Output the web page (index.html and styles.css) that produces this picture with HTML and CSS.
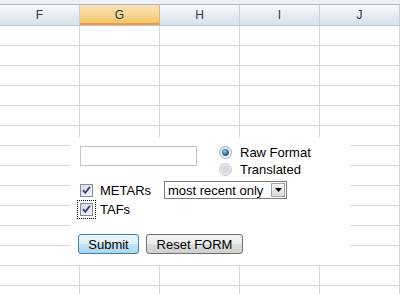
FILE: index.html
```html
<!DOCTYPE html>
<html lang="en">
<head>
  <meta charset="UTF-8">
  <title>METAR / TAF request</title>
  <link rel="stylesheet" href="styles.css">
</head>
<body>
  <div class="sheet">
    <div class="topbar"></div>
    <div class="head">
      <div class="col">F</div>
      <div class="col active">G</div>
      <div class="col">H</div>
      <div class="col">I</div>
      <div class="col">J</div>
    </div>
    <div class="cells"></div>

    <form class="panel" onsubmit="return false">
      <div class="top-row">
        <input class="station" type="text">
        <div class="radios">
          <label class="opt">
            <svg class="radio" width="13" height="13" viewBox="0 0 13 13">
              <defs>
                <linearGradient id="rg" x1="0" y1="0" x2="1" y2="1">
                  <stop offset="0" stop-color="#d9dcdf"/>
                  <stop offset="1" stop-color="#ffffff"/>
                </linearGradient>
                <radialGradient id="dot" cx="0.4" cy="0.35" r="0.7">
                  <stop offset="0" stop-color="#9fd3ec"/>
                  <stop offset="0.5" stop-color="#3b84ad"/>
                  <stop offset="1" stop-color="#1d4f73"/>
                </radialGradient>
              </defs>
              <circle cx="6.5" cy="6.5" r="6" fill="url(#rg)" stroke="#a9b3bd"/>
              <circle cx="6.5" cy="6.5" r="3.4" fill="url(#dot)"/>
            </svg>
            Raw Format
          </label>
          <label class="opt">
            <svg class="radio" width="13" height="13" viewBox="0 0 13 13">
              <circle cx="6.5" cy="6.5" r="6" fill="#e6e8ea" stroke="#c2c7cc"/>
              <circle cx="6.5" cy="6.5" r="4" fill="#d7dadd"/>
            </svg>
            Translated
          </label>
        </div>
      </div>

      <div class="line">
        <label class="check">
          <svg class="box" width="13" height="13" viewBox="0 0 13 13">
            <defs>
              <linearGradient id="cg" x1="0" y1="0" x2="1" y2="1">
                <stop offset="0" stop-color="#d6d9e0"/>
                <stop offset="1" stop-color="#f7f8fa"/>
              </linearGradient>
            </defs>
            <rect x="0.5" y="0.5" width="12" height="12" fill="url(#cg)" stroke="#7d8ea6"/>
            <path d="M3 6.2 L5.3 8.8 L10 2.8" fill="none" stroke="#343c86" stroke-width="1.8"/>
          </svg>
          METARs
        </label>
        <div class="select">
          <span class="value">most recent only</span>
          <span class="arrow"><svg width="7" height="4" viewBox="0 0 7 4"><path d="M0 0 H7 L3.5 4 Z" fill="#000"/></svg></span>
        </div>
      </div>

      <div class="line short">
        <label class="check">
          <span class="focus">
            <svg class="box" width="13" height="13" viewBox="0 0 13 13">
              <rect x="0.5" y="0.5" width="12" height="12" fill="url(#cg)" stroke="#7d8ea6"/>
              <path d="M3 6.2 L5.3 8.8 L10 2.8" fill="none" stroke="#343c86" stroke-width="1.8"/>
            </svg>
          </span>
          TAFs
        </label>
      </div>

      <div class="buttons">
        <button class="btn primary" type="submit">Submit</button>
        <button class="btn reset" type="reset">Reset FORM</button>
      </div>
    </form>
  </div>
</body>
</html>
```

FILE: styles.css
```css
body {
  margin: 0;
  font-family: "Liberation Sans", Arial, sans-serif;
  background: #fff;
}

.sheet {
  position: relative;
  width: 400px;
  height: 294px;
  overflow: hidden;
}

.topbar {
  height: 4px;
  background: #eef2f7;
  border-bottom: 1px solid #a7bace;
}

.head {
  display: grid;
  grid-template-columns: repeat(5, 80px);
  height: 20px;
  border-bottom: 1px solid #b9c7d6;
}

.col {
  display: flex;
  align-items: center;
  justify-content: center;
  font-size: 12px;
  color: #2c3946;
  background: linear-gradient(#f8fafc, #e4e9f0 60%, #d9e1ea);
  border-right: 1px solid #c6d2df;
}

.col.active {
  background: linear-gradient(#fae2b4, #f7d48f 55%, #f1c15f);
  border-right-color: #e8b45d;
  box-shadow: inset 0 -2px 0 #f29b3c;
}

.cells {
  height: 268px;
  background-image:
    linear-gradient(to right, transparent 79px, #d5d9df 79px),
    linear-gradient(to bottom, transparent 19px, #d5d9df 19px);
  background-size: 80px 100%, 100% 20px;
}

/* white form block lying over the grid */
.panel {
  position: absolute;
  left: 70px;
  top: 137px;
  width: 280px;
  height: 128px;
  box-sizing: border-box;
  padding: 7px 0 0 8px;
  background: #fff;
  font-size: 13px;
  color: #000;
}

.top-row {
  display: flex;
  height: 37px;
}

.station {
  box-sizing: border-box;
  width: 117px;
  height: 20px;
  margin: 2px 0 0 2px;
  border: 1px solid #c4c4c4;
  padding: 0 3px;
  font: inherit;
}

.radios {
  margin-left: 22px;
  display: flex;
  flex-direction: column;
}

.opt {
  display: flex;
  align-items: center;
  height: 17px;
  gap: 8px;
}

.line {
  display: grid;
  grid-template-columns: 86px auto;
  align-items: center;
  height: 18px;
}

.line.short {
  height: 17px;
  margin-top: 2px;
}

.check {
  display: flex;
  align-items: center;
  gap: 7px;
  padding-left: 2px;
}

.box {
  display: block;
}

.focus {
  outline: 1px dotted #000;
  outline-offset: 2px;
}

.select {
  display: flex;
  align-items: center;
  justify-content: space-between;
  box-sizing: border-box;
  width: 123px;
  height: 18px;
  border: 1px solid #7b7b7b;
  padding: 0 1px 0 3px;
}

.arrow {
  display: flex;
  align-items: center;
  justify-content: center;
  box-sizing: border-box;
  width: 14px;
  height: 14px;
  border: 1px solid #a4a4a4;
  background: linear-gradient(#f6f6f6, #dadada);
}

.buttons {
  display: flex;
  gap: 7px;
  margin-top: 16px;
}

.btn {
  height: 20px;
  padding: 0 7px;
  font: inherit;
  color: #000;
  border: 1px solid #707070;
  border-radius: 3px;
  background: linear-gradient(#f3f3f3, #ebebeb 50%, #dddddd 50%, #cfcfcf);
}

.btn.primary {
  width: 61px;
  border-color: #3c7fb1;
  background: linear-gradient(#edf7fd, #dcf0fb 50%, #c4e4f6 50%, #add7ef);
}

.btn.reset {
  width: 97px;
}
```
